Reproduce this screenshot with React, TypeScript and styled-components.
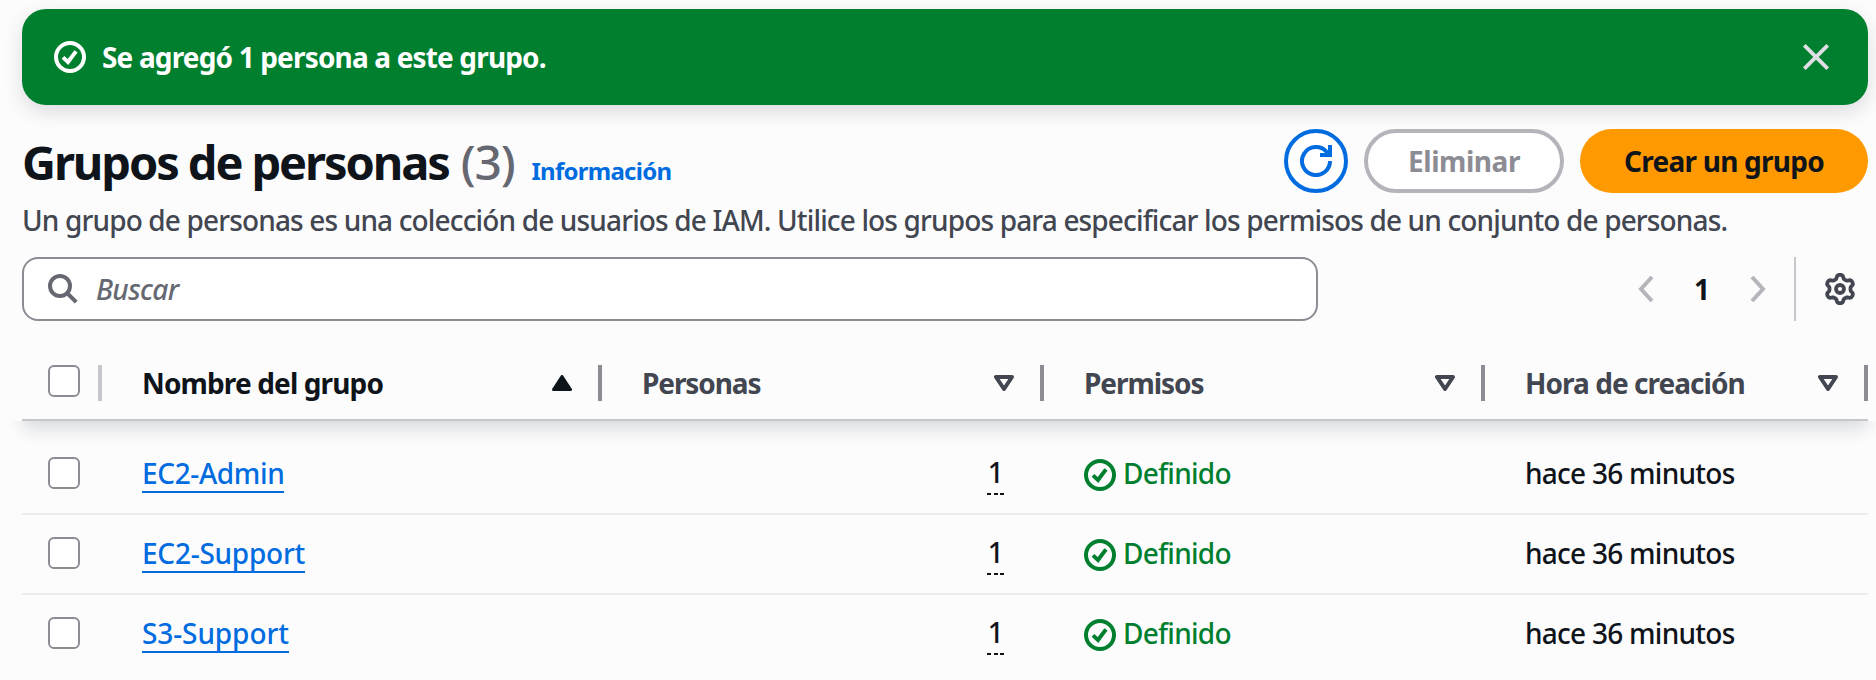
import React from "react";
import styled, { createGlobalStyle, css } from "styled-components";

const color = {
  page: "#fcfcfd",
  text: "#0f141a",
  secondary: "#424650",
  muted: "#656871",
  control: "#8c8c94",
  divider: "#c6c6cd",
  rowLine: "#ebebf0",
  link: "#006ce0",
  success: "#00802f",
  primary: "#ff9900",
};

const GlobalStyle = createGlobalStyle`
  *, *::before, *::after { box-sizing: border-box; }
  body {
    margin: 0;
    background: ${color.page};
    color: ${color.text};
    font-family: "Noto Sans", "Open Sans", sans-serif;
    font-size: 28px;
    font-weight: 500;
    line-height: 40px;
    overflow: hidden;
  }
  svg { display: block; flex: none; }
  button { font: inherit; cursor: pointer; }
`;

const Page = styled.main`
  width: 1876px;
  height: 680px;
  padding: 9px 8px 0 22px;
  display: flex;
  flex-direction: column;
`;

const Flashbar = styled.div`
  height: 96px;
  flex: none;
  padding: 0 39px 0 32px;
  display: flex;
  align-items: center;
  color: #fff;
  background: ${color.success};
  border-radius: 24px;
  box-shadow: 0 7px 20px 0 rgba(0, 7, 22, 0.13);
`;

const FlashMessage = styled.p`
  margin: 0 auto 1px 16px;
  font-weight: 700;
  letter-spacing: -0.84px;
`;

const IconButton = styled.button`
  padding: 0;
  border: 0;
  background: none;
  color: inherit;
`;

const Header = styled.header`
  height: 64px;
  margin-top: 24px;
  flex: none;
  display: flex;
  justify-content: space-between;
`;

const Titles = styled.div`
  padding-top: 1px;
  display: flex;
  align-items: baseline;
  line-height: 64px;
`;

const Title = styled.h1`
  margin: 0;
  font-size: 47px;
  font-weight: 700;
  letter-spacing: -2.1px;
`;

const Counter = styled.span`
  margin-left: 12px;
  font-size: 48px;
  color: ${color.muted};
  letter-spacing: -1.2px;
`;

const InfoLink = styled.a`
  margin-left: 17px;
  font-size: 24px;
  font-weight: 700;
  letter-spacing: -0.74px;
  color: ${color.link};
`;

const Actions = styled.div`
  display: flex;
  gap: 16px;
`;

const Button = styled.button<{ $kind: "icon" | "disabled" | "primary" }>`
  height: 64px;
  padding: 0;
  display: flex;
  align-items: center;
  justify-content: center;
  border-radius: 32px;
  font-weight: 700;
  ${(p) =>
    p.$kind === "icon" &&
    css`
      width: 64px;
      border: 4px solid ${color.link};
      background: #fff;
      color: ${color.link};
    `}
  ${(p) =>
    p.$kind === "disabled" &&
    css`
      width: 200px;
      border: 4px solid #b4b4bb;
      background: #fff;
      color: ${color.control};
      letter-spacing: -0.45px;
    `}
  ${(p) =>
    p.$kind === "primary" &&
    css`
      width: 288px;
      border: 0;
      background: ${color.primary};
      color: ${color.text};
      letter-spacing: -0.76px;
    `}
`;

const Description = styled.p`
  margin: 7px 0 0;
  color: ${color.secondary};
  white-space: nowrap;
  letter-spacing: -0.852px;
`;

const Tools = styled.div`
  height: 64px;
  margin-top: 17px;
  flex: none;
  display: flex;
  align-items: center;
`;

const SearchBox = styled.label`
  width: 1296px;
  height: 64px;
  padding-left: 24px;
  display: flex;
  align-items: center;
  gap: 18px;
  border: 2px solid ${color.control};
  border-radius: 16px;
  background: #fff;
`;

const SearchInput = styled.input`
  flex: 1;
  height: 40px;
  padding: 0;
  border: 0;
  outline: 0;
  background: none;
  font: inherit;
  letter-spacing: -0.6px;
  &::placeholder {
    color: ${color.muted};
    font-style: italic;
    opacity: 1;
  }
`;

const Pagination = styled.nav`
  margin-left: auto;
  height: 64px;
  padding-right: 28px;
  display: flex;
  align-items: center;
  gap: 40px;
  border-right: 2px solid ${color.divider};
  color: #b4b4bb;
`;

const PageNumber = styled.span`
  width: 16px;
  color: ${color.text};
  font-weight: 700;
`;

const Preferences = styled(IconButton)`
  margin: 0 12px 0 28px;
  color: ${color.secondary};
`;

const columns = css`
  display: grid;
  grid-template-columns: 80px 500px 442px 441px 383px;
`;

/* The header casts its shadow downwards only, over the first row. */
const TableHead = styled.div`
  ${columns}
  height: 76px;
  margin-top: 24px;
  flex: none;
  border-bottom: 2px solid ${color.divider};
  background: ${color.page};
  box-shadow: 0 8px 16px rgba(0, 28, 36, 0.14);
  clip-path: polygon(
    0 0,
    100% 0,
    100% 100%,
    calc(100% + 24px) 100%,
    calc(100% + 24px) calc(100% + 40px),
    -24px calc(100% + 40px),
    -24px 100%,
    0 100%
  );
`;

const HeadCell = styled.div<{ $sorted?: boolean; $tracking: number }>`
  padding: 2px 0 0 40px;
  display: flex;
  align-items: center;
  justify-content: space-between;
  font-weight: 700;
  letter-spacing: ${(p) => p.$tracking}px;
  color: ${(p) => (p.$sorted ? color.text : color.secondary)};
  svg {
    margin: 0 26px 0 auto;
  }
`;

const SelectHead = styled.div`
  padding: 2px 0 0 26px;
  display: flex;
  align-items: center;
  justify-content: space-between;
  input {
    margin-bottom: 4px;
  }
`;

const Resizer = styled.span<{ $light?: boolean }>`
  width: 4px;
  height: 36px;
  background: ${(p) => (p.$light ? color.divider : color.control)};
`;

const Checkbox = styled.input.attrs({ type: "checkbox" })`
  appearance: none;
  width: 32px;
  height: 32px;
  margin: 0 0 2px;
  border: 2px solid ${color.control};
  border-radius: 6px;
  background: #fff;
`;

const TableBody = styled.div`
  margin-top: 14px;
`;

const Row = styled.div`
  ${columns}
  height: 80px;
  border-bottom: 2px solid ${color.rowLine};
  &:last-child {
    border-bottom-color: transparent;
  }
`;

const Cell = styled.div<{ $kind?: "select" | "number" }>`
  padding: 0 40px 2px 40px;
  display: flex;
  align-items: center;
  letter-spacing: -0.74px;
  ${(p) =>
    p.$kind === "select" &&
    css`
      padding: 0 0 0 26px;
    `}
  ${(p) =>
    p.$kind === "number" &&
    css`
      padding-bottom: 0;
      justify-content: flex-end;
    `}
`;

const GroupLink = styled.a<{ $tracking: number }>`
  height: 40px;
  border-bottom: 2px solid ${color.link};
  color: ${color.link};
  letter-spacing: ${(p) => p.$tracking}px;
`;

const MemberCount = styled.span`
  width: 17px;
  height: 42px;
  line-height: 38px;
  text-align: center;
  background: repeating-linear-gradient(90deg, ${color.text} 0 4px, transparent 4px 6.5px) bottom / 100% 2px no-repeat;
`;

const Status = styled.span`
  display: flex;
  align-items: center;
  gap: 7px;
  color: ${color.success};
  letter-spacing: -0.74px;
  svg {
    margin-top: 4px;
  }
`;

const CheckCircle = () => (
  <svg width="32" height="32" viewBox="0 0 32 32" fill="none" stroke="currentColor" strokeWidth="4">
    <circle cx="16" cy="16" r="14" />
    <path d="M9 16.4l5 4.6 8-10.6" />
  </svg>
);

const SortIcon = ({ filled }: { filled?: boolean }) => (
  <svg width="20" height="16" viewBox="0 0 20 16" strokeLinejoin="round" stroke="currentColor">
    {filled ? (
      <path d="M10 1.5L18.5 14.5H1.5z" fill="currentColor" strokeWidth="3" />
    ) : (
      <path d="M10 14L2 2H18z" fill="none" strokeWidth="4" />
    )}
  </svg>
);

const Chevron = ({ right }: { right?: boolean }) => (
  <svg width="16" height="28" viewBox="0 0 16 28" fill="none" stroke="currentColor" strokeWidth="4">
    <path d={right ? "M2 2l11 12L2 26" : "M14 2L3 14l11 12"} />
  </svg>
);

/* Outline of a six-toothed gear, centred on 16,16. */
const gear = (() => {
  const points: string[] = [];
  const n = 96;
  for (let i = 0; i < n; i++) {
    const a = (i / n) * Math.PI * 2;
    const wave = Math.tanh(1.8 * Math.cos(6 * a)) / Math.tanh(1.8);
    const r = 12.3 + 1.8 * wave;
    points.push(`${(16 + r * Math.sin(a)).toFixed(2)} ${(16 - r * Math.cos(a)).toFixed(2)}`);
  }
  return `M${points.join("L")}z`;
})();

const headings = [
  { label: "Nombre del grupo", tracking: -0.86 },
  { label: "Personas", tracking: -1.1 },
  { label: "Permisos", tracking: -1.05 },
  { label: "Hora de creación", tracking: -0.95 },
];

const groups = [
  { name: "EC2-Admin", tracking: -0.37 },
  { name: "EC2-Support", tracking: -0.25 },
  { name: "S3-Support", tracking: -0.1 },
];

export default function App() {
  return (
    <>
      <GlobalStyle />
      <Page>
        <Flashbar>
          <CheckCircle />
          <FlashMessage>Se agregó 1 persona a este grupo.</FlashMessage>
          <IconButton aria-label="Cerrar">
            <svg width="26" height="28" viewBox="0 0 26 28" fill="none" stroke="#dedee3" strokeWidth="4">
              <path d="M1.3 2.3l23.4 23.4M24.7 2.3L1.3 25.7" />
            </svg>
          </IconButton>
        </Flashbar>

        <Header>
          <Titles>
            <Title>Grupos de personas</Title>
            <Counter>(3)</Counter>
            <InfoLink>Información</InfoLink>
          </Titles>
          <Actions>
            <Button $kind="icon" aria-label="Actualizar">
              <svg width="32" height="32" viewBox="0 0 32 32" fill="none" stroke="currentColor" strokeWidth="4">
                <path d="M30 16A14 14 0 1 1 26.5 6.8L29 10" />
                <path d="M30 0v10H20" />
              </svg>
            </Button>
            <Button $kind="disabled">Eliminar</Button>
            <Button $kind="primary">Crear un grupo</Button>
          </Actions>
        </Header>
        <Description>
          Un grupo de personas es una colección de usuarios de IAM. Utilice los grupos para especificar los permisos de
          un conjunto de personas.
        </Description>

        <Tools>
          <SearchBox>
            <svg width="30" height="30" viewBox="0 0 30 30" fill="none" stroke={color.muted} strokeWidth="4">
              <circle cx="12" cy="12" r="10" />
              <path d="M19 19l9.2 9.2" />
            </svg>
            <SearchInput placeholder="Buscar" />
          </SearchBox>
          <Pagination>
            <Chevron />
            <PageNumber>1</PageNumber>
            <Chevron right />
          </Pagination>
          <Preferences aria-label="Preferencias">
            <svg width="32" height="32" viewBox="0 0 32 32" fill="none" stroke="currentColor" strokeWidth="3.8">
              <path d={gear} strokeLinejoin="round" />
              <circle cx="16" cy="16" r="4" />
            </svg>
          </Preferences>
        </Tools>

        <TableHead>
          <SelectHead>
            <Checkbox />
            <Resizer $light />
          </SelectHead>
          {headings.map(({ label, tracking }, i) => (
            <HeadCell key={label} $sorted={i === 0} $tracking={tracking}>
              {label}
              <SortIcon filled={i === 0} />
              <Resizer />
            </HeadCell>
          ))}
        </TableHead>
        <TableBody>
          {groups.map((group) => (
            <Row key={group.name}>
              <Cell $kind="select">
                <Checkbox />
              </Cell>
              <Cell>
                <GroupLink $tracking={group.tracking}>{group.name}</GroupLink>
              </Cell>
              <Cell $kind="number">
                <MemberCount>1</MemberCount>
              </Cell>
              <Cell>
                <Status>
                  <CheckCircle />
                  Definido
                </Status>
              </Cell>
              <Cell>hace 36 minutos</Cell>
            </Row>
          ))}
        </TableBody>
      </Page>
    </>
  );
}
